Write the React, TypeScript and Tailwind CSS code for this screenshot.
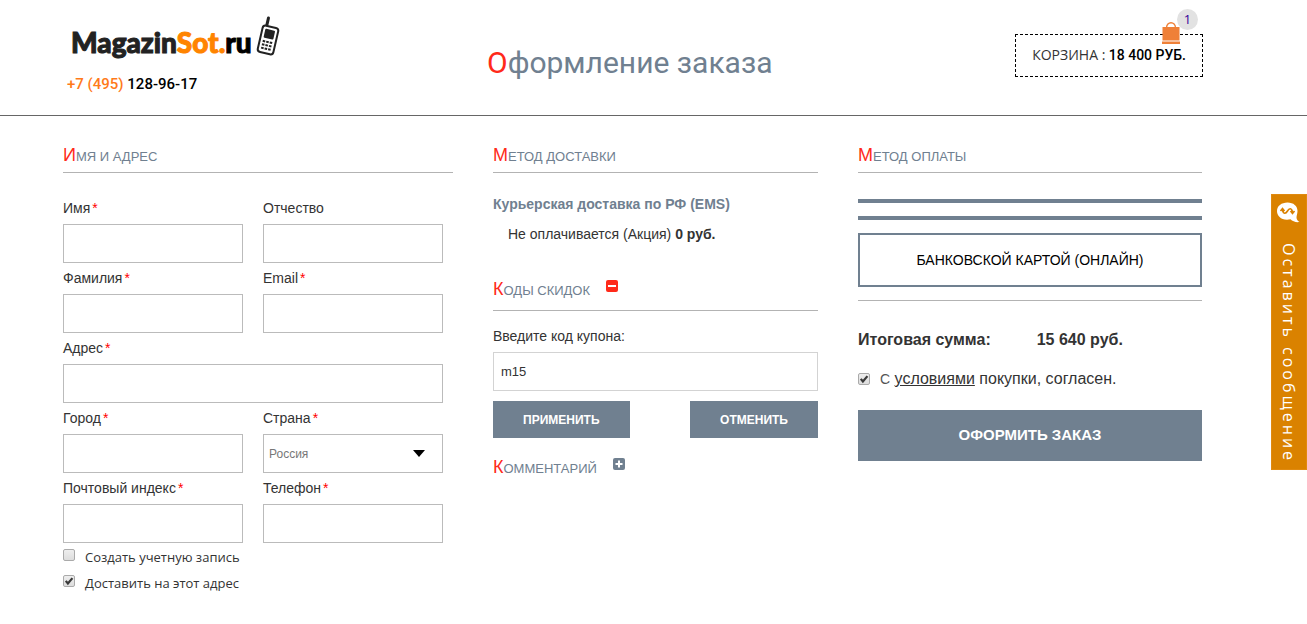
import React, { useState } from 'react';

const Heading = ({
  children,
  className = '',
}: {
  children: React.ReactNode;
  className?: string;
}) => (
  <h2
    className={`text-[13px] leading-6 uppercase text-[#708090] first-letter:text-lg first-letter:text-[#ff2a1a] ${className}`}
  >
    {children}
  </h2>
);

const Label = ({
  id,
  text,
  required,
}: {
  id: string;
  text: string;
  required?: boolean;
}) => (
  <label htmlFor={id} className="block text-sm leading-[31px]">
    {text}
    {required && <span className="ml-0.5 text-[#f00]">*</span>}
  </label>
);

const Field = ({
  id,
  text,
  required,
  className = '',
}: {
  id: string;
  text: string;
  required?: boolean;
  className?: string;
}) => (
  <div className={className}>
    <Label id={id} text={text} required={required} />
    <input
      id={id}
      type="text"
      className="block h-[39px] w-full border border-[#bbb] px-2 text-[13px] outline-none"
    />
  </div>
);

const Checkbox = ({ id, checked }: { id: string; checked?: boolean }) => (
  <span className="relative block size-3 shrink-0">
    <input
      id={id}
      type="checkbox"
      defaultChecked={checked}
      className="peer block size-3 appearance-none rounded-xs border border-[#aaa] bg-linear-to-b from-[#eee] to-[#ddd]"
    />
    <svg
      viewBox="0 0 13 13"
      className="pointer-events-none absolute inset-0 hidden size-3 peer-checked:block"
    >
      <path
        d="M3 6.4 5.3 9.2 10.2 3.4"
        fill="none"
        stroke="#3a3a3a"
        strokeWidth="2.4"
      />
    </svg>
  </span>
);

const ToggleIcon = ({ open }: { open: boolean }) => (
  <svg
    viewBox="0 0 12 12"
    className={`size-3 ${open ? 'text-[#ff2a1a]' : 'text-[#708090]'}`}
  >
    <rect width="12" height="12" rx="2" fill="currentColor" />
    <path
      d={open ? 'M2 6H10' : 'M2.5 6H9.5M6 2.5V9.5'}
      stroke="#fff"
      strokeWidth="2"
    />
  </svg>
);

const Phone = () => (
  <svg viewBox="0 0 24 42" className="h-[42px] w-6">
    <g transform="rotate(13 12 24)">
      <path d="M7.5 12V2.5" stroke="#222" strokeWidth="3" strokeLinecap="round" />
      <rect
        x="4"
        y="10.5"
        width="16"
        height="27"
        rx="3"
        fill="#fff"
        stroke="#222"
        strokeWidth="2"
      />
      <rect x="7" y="13.5" width="10" height="9" rx="1" fill="#222" />
      <path
        d="M7 26H17M7 29.500H17M7 33H17"
        stroke="#222"
        strokeWidth="2"
        strokeDasharray="2.600 1"
      />
    </g>
  </svg>
);

const App = () => {
  const [codesOpen, setCodesOpen] = useState(true);
  const [commentOpen, setCommentOpen] = useState(false);

  return (
    <div className="relative min-h-screen bg-white font-['Liberation_Sans',Arial,sans-serif] text-[#333]">
      <header className="grid grid-cols-[420fr_716fr] border-b border-[#666] pr-[104px] pb-[21px] pl-[67px]">
        <div className="pt-4">
          <a
            href="#"
            className="flex gap-1 pl-1 font-['Lato',sans-serif] text-[28px] leading-[52px] font-black text-[#222] [-webkit-text-stroke:1px]"
          >
            <span>
              Magazin<span className="text-[#ff8400]">Sot.</span>
              <span className="text-black">ru</span>
            </span>
            <Phone />
          </a>
          <a
            href="tel:+74951289617"
            className="mt-1.5 block font-['Roboto',sans-serif] text-[15px] leading-5 font-medium text-black"
          >
            <span className="text-[#ff7a1a]">+7 (495)</span> 128-96-17
          </a>
        </div>
        <div className="flex items-start justify-between">
          <h1 className="pt-[45px] font-['Roboto',sans-serif] text-3xl text-[#708090] first-letter:text-[#ff2a1a]">
            Оформление заказа
          </h1>
          <a
            href="#"
            className="relative mt-[34px] block h-[43px] border border-dashed border-black px-4 py-2.5 font-['Roboto',sans-serif] text-sm font-medium text-black"
          >
            <span className="font-['Open_Sans',sans-serif] leading-none font-normal text-[#333]">
              КОРЗИНА :
            </span>{' '}
            18 400 РУБ.
            <svg
              viewBox="0 0 18 22"
              className="absolute -top-[13px] right-[22px] h-[22px] w-[18px]"
            >
              <path
                d="M4.5 6C4.5 -1 13.5 -1 13.5 6"
                fill="none"
                stroke="#ef8038"
                strokeWidth="1.4"
              />
              <path d="M0.5 5H17.5V18.5H0.5ZM0 19.500H18V22H0Z" fill="#ef8038" />
            </svg>
            <span className="absolute -top-[26px] right-1 size-[21px] rounded-full bg-[#e2e2e2] text-center font-['Open_Sans',sans-serif] text-[13px] leading-[21px] font-normal text-[#309]">
              1
            </span>
          </a>
        </div>
      </header>

      <form
        onSubmit={(e) => e.preventDefault()}
        className="grid grid-cols-[390fr_325fr_344fr] items-start gap-10 pt-[25px] pr-[105px] pl-[63px]"
      >
        <section>
          <Heading className="h-8 border-b border-[#b3b3b3]">
            Имя и адрес
          </Heading>
          <div className="mt-5 grid grid-cols-2 gap-x-5 pr-2.5">
            <Field id="name" text="Имя" required />
            <Field id="middle" text="Отчество" />
            <Field id="surname" text="Фамилия" required />
            <Field id="email" text="Email" required />
            <Field id="address" text="Адрес" required className="col-span-2" />
            <Field id="city" text="Город" required />
            <div>
              <Label id="country" text="Страна" required />
              <div className="relative">
                <select
                  id="country"
                  className="block h-[39px] w-full appearance-none border border-[#bbb] bg-white px-[5px] text-xs text-[#777] outline-none"
                >
                  <option>Россия</option>
                </select>
                <svg
                  viewBox="0 0 12 7"
                  className="pointer-events-none absolute top-4 right-[18px] h-[7px] w-3"
                >
                  <path d="M0 0H12L6 7Z" fill="#000" />
                </svg>
              </div>
            </div>
            <Field id="zip" text="Почтовый индекс" required />
            <Field id="phone" text="Телефон" required />
          </div>
          <div className="font-['Open_Sans',sans-serif] text-[13px]">
            <div className="flex h-[26px] gap-2.5 leading-7">
              <div className="pt-1.5">
                <Checkbox id="account" />
              </div>
              <label htmlFor="account">Создать учетную запись</label>
            </div>
            <div className="flex h-[26px] gap-2.5 leading-7">
              <div className="pt-1.5">
                <Checkbox id="deliver" checked />
              </div>
              <label htmlFor="deliver">Доставить на этот адрес</label>
            </div>
          </div>
        </section>

        <section>
          <Heading className="h-8 border-b border-[#b3b3b3]">
            Метод доставки
          </Heading>
          <p className="mt-[21px] text-sm font-bold text-[#708090]">
            Курьерская доставка по РФ (EMS)
          </p>
          <p className="mt-2.5 pl-[15px] text-sm">
            Не оплачивается (Акция) <b>0 руб.</b>
          </p>
          <div className="mt-[31px] flex h-9 items-start gap-4 border-b border-[#b3b3b3]">
            <Heading>Коды скидок</Heading>
            <button
              type="button"
              aria-label="Коды скидок"
              onClick={() => setCodesOpen(!codesOpen)}
              className="pt-[5px]"
            >
              <ToggleIcon open={codesOpen} />
            </button>
          </div>
          {codesOpen && (
            <div className="mt-2.5">
              <Label id="coupon" text="Введите код купона:" />
              <input
                id="coupon"
                type="text"
                defaultValue="m15"
                className="block h-[39px] w-full border border-[#d3d3d3] px-[7px] text-[13px] outline-none"
              />
              <div className="mt-2.5 flex justify-between text-xs font-bold text-white">
                <button
                  type="button"
                  className="h-[37px] bg-[#708090] px-[30px]"
                >
                  ПРИМЕНИТЬ
                </button>
                <button
                  type="button"
                  className="h-[37px] bg-[#708090] px-[30px]"
                >
                  ОТМЕНИТЬ
                </button>
              </div>
            </div>
          )}
          <div className="mt-[15px] flex items-start gap-4">
            <Heading>Комментарий</Heading>
            <button
              type="button"
              aria-label="Комментарий"
              onClick={() => setCommentOpen(!commentOpen)}
              className="pt-[5px]"
            >
              <ToggleIcon open={commentOpen} />
            </button>
          </div>
        </section>

        <section>
          <Heading className="h-8 border-b border-[#b3b3b3]">
            Метод оплаты
          </Heading>
          <div className="mt-[26px] flex flex-col gap-[13px] border-b border-[#b3b3b3] pb-[13px]">
            <div className="h-1 bg-[#708090]" />
            <div className="h-1 bg-[#708090]" />
            <button
              type="button"
              className="h-[54px] border-2 border-[#708090] text-sm text-black"
            >
              БАНКОВСКОЙ КАРТОЙ (ОНЛАЙН)
            </button>
          </div>
          <div className="mt-[27px] flex gap-[46px] leading-6 font-bold">
            <span>Итоговая сумма:</span>
            <span>15 640 руб.</span>
          </div>
          <div className="mt-[15px] flex items-center gap-2.5 leading-6">
            <Checkbox id="terms" checked />
            <label htmlFor="terms">
              <span className="text-sm text-[#555]">С</span>{' '}
              <a href="#" className="underline">
                условиями
              </a>{' '}
              покупки, согласен.
            </label>
          </div>
          <button
            type="submit"
            className="mt-[19px] h-[51px] w-full bg-[#708090] text-[15px] font-bold text-white"
          >
            ОФОРМИТЬ ЗАКАЗ
          </button>
        </section>
      </form>

      <button
        type="button"
        className="fixed top-[194px] right-0 flex h-[276px] w-9 flex-col items-center border border-[#e08a10] bg-[#da8200] pt-[7px] text-white"
      >
        <svg viewBox="0 0 24 21" className="h-[21px] w-6">
          <path
            d="M10.5 0.500C16.500 0.500 20.500 4 20.500 9C20.500 11.500 19.500 13.500 19.500 15.500C19.500 17.500 21 19 22.500 20C19 20.500 15.500 19.500 13.500 17.300C5 19 0 14.500 0 9C0 4 4.500 0.500 10.500 0.500Z"
            fill="#fff"
          />
          <path
            d="M15.500 11.500C15.500 6 12.500 5.500 10.500 9C8.500 12.500 5.500 12 5.500 6.500M3.500 9L5.500 6.500L7.500 9M13.500 9L15.500 11.500L17.500 9"
            fill="none"
            stroke="#da8200"
            strokeWidth="1.600"
          />
        </svg>
        <span className="mt-5 font-['Open_Sans',sans-serif] text-base leading-5 tracking-[3px] whitespace-nowrap [writing-mode:vertical-rl]">
          Оставить сообщение
        </span>
      </button>
    </div>
  );
};

export default App;
